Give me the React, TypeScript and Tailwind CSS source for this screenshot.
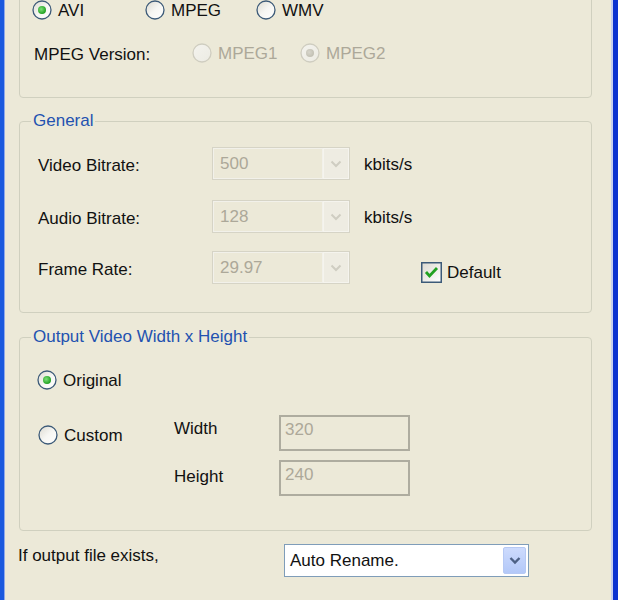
import React from "react";

const FONT = { fontFamily: '"Liberation Sans", Arial, sans-serif' };

function Radio({ checked = false, disabled = false }: { checked?: boolean; disabled?: boolean }) {
  const id = `rg-${checked ? "c" : "u"}-${disabled ? "d" : "e"}`;
  return (
    <svg width="20" height="20" viewBox="0 0 20 20" className="shrink-0">
      <defs>
        <linearGradient id={id} x1="0" y1="0" x2="1" y2="1">
          {disabled ? (
            <>
              <stop offset="0" stopColor="#f4f3ee" />
              <stop offset="1" stopColor="#ecebe3" />
            </>
          ) : (
            <>
              <stop offset="0" stopColor="#dcdad0" />
              <stop offset="0.5" stopColor="#f6f6f3" />
              <stop offset="1" stopColor="#ffffff" />
            </>
          )}
        </linearGradient>
        <radialGradient id={`${id}-dot`} cx="0.4" cy="0.4" r="0.6">
          <stop offset="0" stopColor={disabled ? "#d8d6cc" : "#7ee07a"} />
          <stop offset="1" stopColor={disabled ? "#c2c0b4" : "#21a121"} />
        </radialGradient>
      </defs>
      <circle cx="10" cy="10" r="9" fill={`url(#${id})`} stroke={disabled ? "#cfcdc0" : "#3c5a78"} strokeWidth="1.3" />
      {checked && <circle cx="10" cy="10" r="4" fill={`url(#${id}-dot)`} />}
    </svg>
  );
}

function RadioItem({
  label,
  checked,
  disabled,
  className = "",
}: {
  label: string;
  checked?: boolean;
  disabled?: boolean;
  className?: string;
}) {
  return (
    <div className={`flex items-center gap-[6px] h-[20px] ${className}`}>
      <Radio checked={checked} disabled={disabled} />
      <span className={`pt-[2px] ${disabled ? "text-[#aca899]" : "text-[#111]"}`}>{label}</span>
    </div>
  );
}

function DisabledCombo({ value }: { value: string }) {
  return (
    <div className="flex w-[138px] h-[33px] border border-[#d6d4c6] bg-[#ece9d8]">
      <div className="flex-1 flex items-center pl-[6px] text-[#aca899] border border-[#f2f1ea]">{value}</div>
      <div className="w-[26px] flex items-center justify-center border border-[#f5f4ee] bg-[#eeece2]">
        <svg width="12" height="8" viewBox="0 0 12 8">
          <path d="M1.5 1.5 L6 6 L10.5 1.5" fill="none" stroke="#cfcdc2" strokeWidth="2" />
        </svg>
      </div>
    </div>
  );
}

function DisabledInput({ value }: { value: string }) {
  return (
    <div className="w-[131px] h-[36px] border-[2px] border-[#aeac9f] bg-[#ece9d8] flex items-start pt-[3px] pl-[4px] text-[#aca899]">
      {value}
    </div>
  );
}

function GroupTitle({ children }: { children: React.ReactNode }) {
  return (
    <span className="absolute -top-[11px] left-[11px] px-[2px] leading-[20px] bg-[#ece9d8] text-[#2352b0]">
      {children}
    </span>
  );
}

export default function App() {
  return (
    <div className="w-[618px] h-[600px] overflow-hidden flex bg-[#ece9d8] text-[17px] leading-[20px]" style={FONT}>
      <div className="w-[4px] h-full bg-[#1b59de]" />
      <div className="w-[1px] h-full bg-[#8fa9ea]" />

      <div className="flex-1 flex flex-col">
        {/* Format group */}
        <div className="-mt-[31px] ml-[14px] w-[573px] h-[129px] shrink-0 border border-[#d0d0bf] rounded-[4px] pt-[30px]">
          <div className="flex pl-[12px]">
            <RadioItem label="AVI" checked className="w-[113px]" />
            <RadioItem label="MPEG" className="w-[111px]" />
            <RadioItem label="WMV" />
          </div>
          <div className="flex items-center pl-[14px] mt-[23px] h-[20px]">
            <span className="w-[158px] pt-[3px] text-[#111]">MPEG Version:</span>
            <RadioItem label="MPEG1" disabled className="w-[108px]" />
            <RadioItem label="MPEG2" checked disabled />
          </div>
        </div>

        {/* General group */}
        <div className="relative mt-[23px] ml-[14px] w-[573px] h-[192px] shrink-0 border border-[#d0d0bf] rounded-[4px] pt-[25px] pl-[18px]">
          <GroupTitle>General</GroupTitle>
          <div className="flex items-center h-[33px]">
            <span className="w-[174px] pt-[4px] text-[#111]">Video Bitrate:</span>
            <DisabledCombo value="500" />
            <span className="ml-[14px] pt-[2px] text-[#111]">kbits/s</span>
          </div>
          <div className="flex items-center h-[33px] mt-[20px]">
            <span className="w-[174px] pt-[4px] text-[#111]">Audio Bitrate:</span>
            <DisabledCombo value="128" />
            <span className="ml-[14px] pt-[2px] text-[#111]">kbits/s</span>
          </div>
          <div className="flex items-center h-[33px] mt-[18px]">
            <span className="w-[174px] pt-[4px] text-[#111]">Frame Rate:</span>
            <DisabledCombo value="29.97" />
            <div className="ml-[71px] mt-[9px] flex items-center gap-[5px]">
              <svg width="21" height="21" viewBox="0 0 21 21">
                <defs>
                  <linearGradient id="cbg" x1="0" y1="0" x2="1" y2="1">
                    <stop offset="0" stopColor="#dcdad0" />
                    <stop offset="1" stopColor="#ffffff" />
                  </linearGradient>
                </defs>
                <rect x="0.75" y="0.75" width="19.5" height="19.5" fill="url(#cbg)" stroke="#3c5a78" strokeWidth="1.5" />
                <path d="M5 10 L8.5 14 L16 6" fill="none" stroke="#21a121" strokeWidth="2.8" />
              </svg>
              <span className="pt-[2px] text-[#111]">Default</span>
            </div>
          </div>
        </div>

        {/* Output size group */}
        <div className="relative mt-[24px] ml-[14px] w-[573px] h-[194px] shrink-0 border border-[#d0d0bf] rounded-[4px] pt-[32px] pl-[17px]">
          <GroupTitle>Output Video Width x Height</GroupTitle>
          <RadioItem label="Original" checked />
          <div className="flex mt-[25px]">
            <div className="w-[137px] pt-[10px] pl-[1px]">
              <RadioItem label="Custom" />
            </div>
            <div className="flex flex-col gap-[9px]">
              <div className="flex">
                <span className="w-[105px] pt-[4px] text-[#111]">Width</span>
                <DisabledInput value="320" />
              </div>
              <div className="flex">
                <span className="w-[105px] pt-[7px] text-[#111]">Height</span>
                <DisabledInput value="240" />
              </div>
            </div>
          </div>
        </div>

        {/* Bottom row */}
        <div className="flex mt-[13px] ml-[13px]">
          <span className="w-[266px] pt-[2px] text-[#111]">If output file exists,</span>
          <div className="flex w-[245px] h-[33px] border border-[#7f9db9] bg-white">
            <div className="flex-1 flex items-center pl-[5px] pt-[1px] text-[#111]">Auto Rename.</div>
            <div className="w-[23px] my-[2px] mr-[2px] flex items-center justify-center rounded-[2px] border border-[#b6c9f4] bg-gradient-to-b from-[#cddbfd] to-[#b3c8f8]">
              <svg width="12" height="9" viewBox="0 0 12 9">
                <path d="M1.5 2 L6 6.5 L10.5 2" fill="none" stroke="#4d6185" strokeWidth="2.4" />
              </svg>
            </div>
          </div>
        </div>
      </div>

      <div className="w-[2px] h-full bg-[#c6cfee]" />
      <div className="w-[5px] h-full bg-[#0a32d0]" />
    </div>
  );
}
